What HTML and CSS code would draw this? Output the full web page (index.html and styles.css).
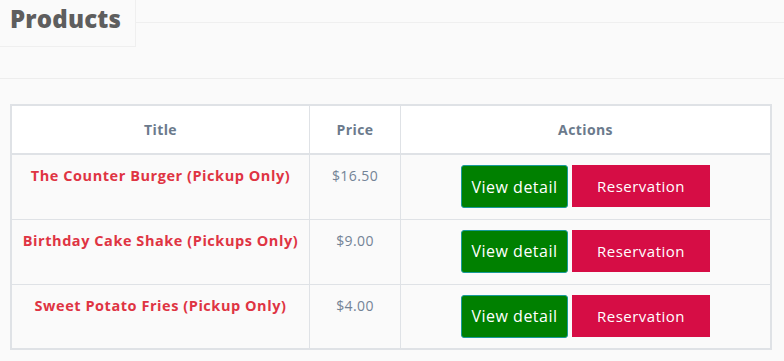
FILE: index.html
```html
<html>

<head>
    <meta http-equiv="Content-Type" content="text/html" charset="utf-8">
    <title>Products</title>
    <link rel="stylesheet" href="styles.css">
</head>

<body>
    <div class="page-header">
        <div class="title-bar">
            <h1 class="page-title">Products</h1>
            <div class="title-rest"></div>
        </div>
    </div>

    <table class="product-table">
        <thead>
            <tr>
                <th class="col-title">Title</th>
                <th class="col-price">Price</th>
                <th>Actions</th>
            </tr>
        </thead>
        <tbody>
            <tr>
                <td class="name">The Counter Burger (Pickup Only)</td>
                <td class="price">$16.50</td>
                <td class="actions">
                    <button class="btn-detail">View detail</button><button class="btn-reserve">Reservation</button>
                </td>
            </tr>
            <tr>
                <td class="name">Birthday Cake Shake (Pickups Only)</td>
                <td class="price">$9.00</td>
                <td class="actions">
                    <button class="btn-detail">View detail</button><button class="btn-reserve">Reservation</button>
                </td>
            </tr>
            <tr>
                <td class="name">Sweet Potato Fries (Pickup Only)</td>
                <td class="price">$4.00</td>
                <td class="actions">
                    <button class="btn-detail">View detail</button><button class="btn-reserve">Reservation</button>
                </td>
            </tr>
        </tbody>
    </table>
</body>

</html>
```

FILE: styles.css
```css
body {
    margin: 0;
    background-color: #fafafa;
    font-family: 'Open Sans', 'Noto Sans', sans-serif;
}

.page-header {
    height: 78px;
    border-bottom: 1px solid #ededed;
}

.title-bar {
    display: flex;
}

.page-title {
    margin: 0;
    width: 136px;
    height: 47px;
    box-sizing: border-box;
    padding: 2px 0 0 10px;
    border-right: 1px solid #efefef;
    border-bottom: 1px solid #efefef;
    font-size: 24px;
    font-weight: 800;
    letter-spacing: 0.2px;
    color: #5e5e5e;
}

.title-rest {
    flex: 1;
    height: 22px;
    border-bottom: 1px solid #efefef;
}

.product-table {
    margin: 25px 12px 0 10px;
    width: 762px;
    border-collapse: collapse;
    border: 2px solid #dfe2e6;
}

.product-table th,
.product-table td {
    border: 1px solid #dfe2e6;
    text-align: center;
    vertical-align: top;
}

.product-table th {
    height: 49px;
    vertical-align: middle;
    background-color: #fff;
    border-bottom-width: 2px;
    font-size: 14px;
    font-weight: 700;
    letter-spacing: 0.4px;
    color: #6b7a8c;
}

.col-title {
    width: 295px;
}

.col-price {
    width: 88px;
}

.product-table td {
    height: 65px;
    padding: 0;
}

.name {
    padding-top: 11px !important;
    font-size: 14.5px;
    font-weight: 700;
    letter-spacing: 0.55px;
    color: #df3443;
}

.price {
    padding-top: 11px !important;
    font-size: 14px;
    letter-spacing: 0.4px;
    color: #748396;
}

.actions {
    padding-top: 10px !important;
}

.actions button {
    font-family: inherit;
    color: #fff;
    cursor: pointer;
    vertical-align: top;
}

.btn-detail {
    width: 107px;
    height: 43px;
    padding: 0;
    background-color: #008000;
    border: 1px solid #1a9a9a;
    border-radius: 3px;
    font-size: 16px;
    letter-spacing: 0.5px;
}

.btn-reserve {
    width: 138px;
    height: 42px;
    padding: 0;
    margin-left: 4px;
    background-color: #d60d45;
    border: 0;
    font-size: 15px;
    letter-spacing: 0.5px;
}
```
